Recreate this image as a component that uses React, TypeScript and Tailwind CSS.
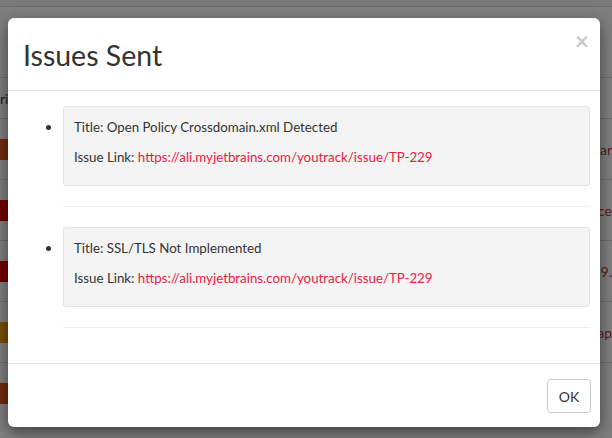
import React from 'react';

const issues = [
  { title: 'Open Policy Crossdomain.xml Detected', link: 'https://ali.myjetbrains.com/youtrack/issue/TP-229' },
  { title: 'SSL/TLS Not Implemented', link: 'https://ali.myjetbrains.com/youtrack/issue/TP-229' },
];

export default function App() {
  return (
    <div className="relative w-[612px] h-[438px] overflow-hidden bg-white" style={{ fontFamily: 'Lato, "Noto Sans", sans-serif' }}>
      {/* page behind the dialog */}
      <div className="h-[7px] bg-[#f2f2f2] border-b border-[#d8d8d8]" />
      <div className="h-[70px]" />
      <div className="flex flex-col">
        <div className="h-[41px] border-t border-[#dddddd] flex items-center justify-between pl-0 text-[14px] text-[#444]">
          <span>ri</span>
        </div>
        {[0, 1, 2, 3, 4].map((i) => (
          <div key={i} className="h-[61px] border-t border-[#dddddd] flex items-center justify-between">
            <span className={`h-[21px] w-[30px] ${['bg-[#e4561f]', 'bg-[#e00000]', 'bg-[#e00000]', 'bg-[#f0a000]', 'bg-[#e4561f]'][i]} text-white text-[12px] leading-[21px] text-right pr-1`}>ca</span>
            <span className="text-[14px] text-[#c0392b]">{['ar', 'ce', '9.', 'ap', ''][i]}</span>
          </div>
        ))}
      </div>

      {/* backdrop */}
      <div className="absolute inset-0 bg-black/50" />

      {/* dialog */}
      <div className="absolute inset-0 pl-[8px] pt-[18px]">
        <div className="w-[592px] h-[409px] bg-white rounded-[6px] shadow-[0_5px_15px_rgba(0,0,0,0.5)] flex flex-col text-[#333]">
          <div className="h-[73px] border-b border-[#e5e5e5] flex items-center justify-between pl-[15px] pr-[11px]">
            <h4 className="text-[28.5px] leading-[34px] pt-[2px] text-[#333]">Issues Sent</h4>
            <span className="text-[24px] font-bold text-[#c8c8c8] leading-none -mt-[26px]">×</span>
          </div>
          <div className="flex-1 pl-[55px] pr-[10px] pt-[15px]">
            <ul className="list-disc pl-0">
              {issues.map((it, i) => (
                <li key={i} className="text-[13.3px] marker:text-[16px]">
                  <div className="bg-[#f4f4f4] border border-[#e3e3e3] rounded-[3px] pl-[10px] pt-[10px] pb-[17px] h-[80px]">
                    <p className="leading-[20px] mb-[10px]">Title: {it.title}</p>
                    <p className="leading-[20px]">
                      Issue Link: <a className="text-[#e8203e]" href="#">{it.link}</a>
                    </p>
                  </div>
                  <hr className="border-[#eeeeee] mt-[20px] mb-[20px]" />
                </li>
              ))}
            </ul>
          </div>
          <div className="h-[64px] border-t border-[#e5e5e5] flex items-start justify-end pr-[9px] pt-[15px]">
            <button className="h-[34px] w-[44px] border border-[#cccccc] rounded-[4px] bg-white text-[14px] text-[#333]">OK</button>
          </div>
        </div>
      </div>
    </div>
  );
}
